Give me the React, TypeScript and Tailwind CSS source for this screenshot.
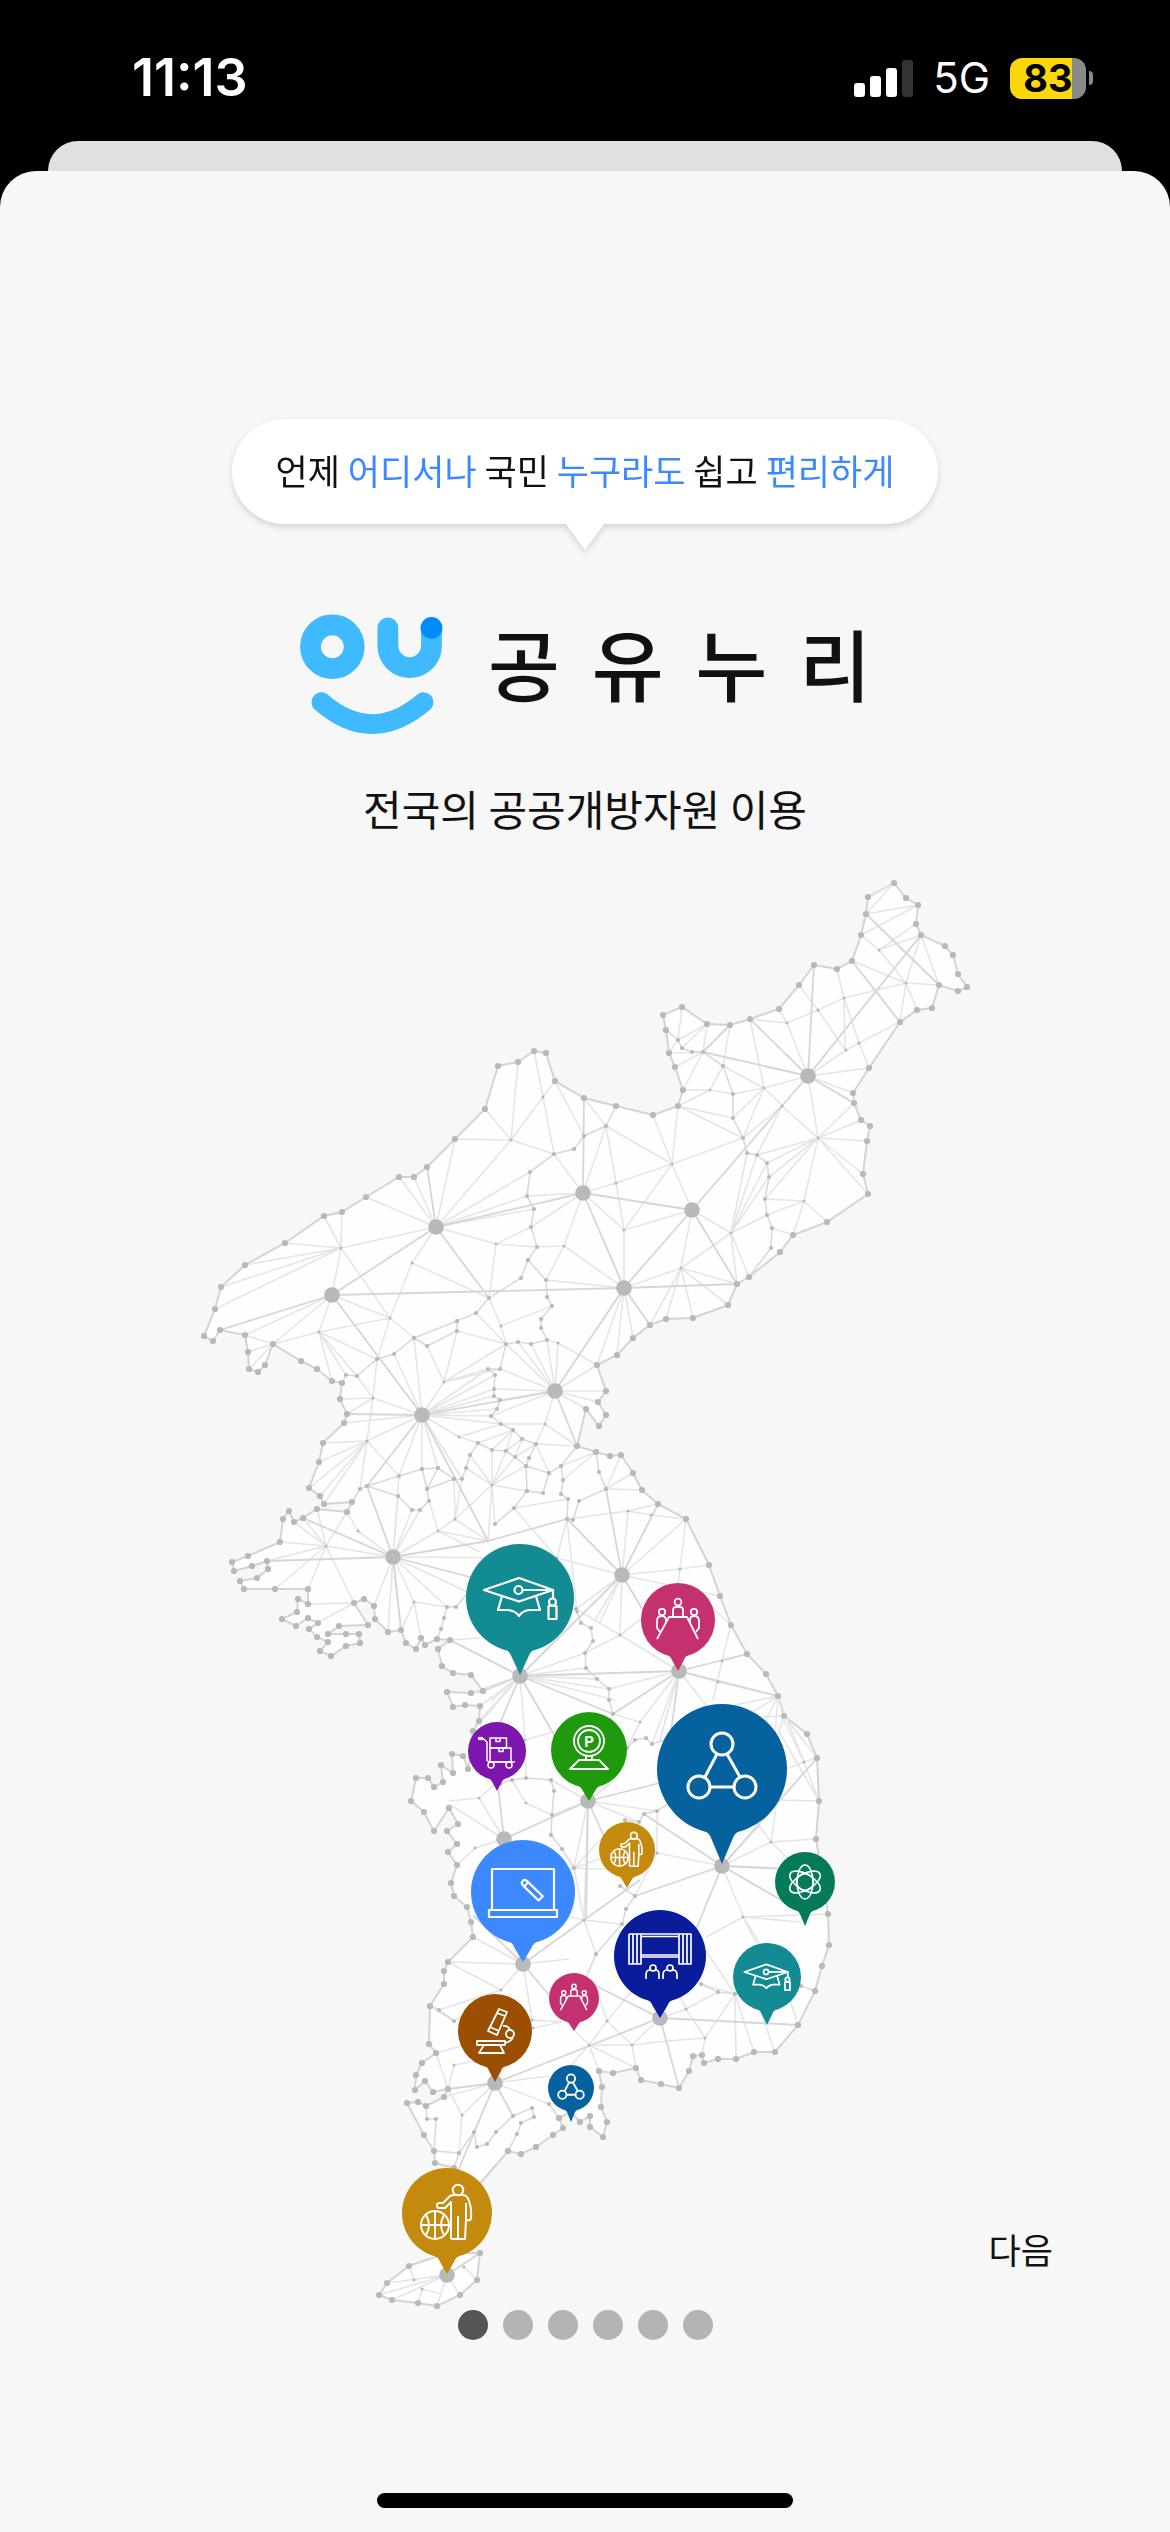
import React from 'react';

// Every list below is flat: x, y, x, y, ... in map units.
const COAST = [
  894, 883, 906, 898, 918, 905, 916, 924, 921, 935, 945, 946, 953, 955, 958, 974, 967, 987, 958, 991, 939, 985, 932, 1008,
  917, 1010, 900, 1022, 869, 1068, 853, 1093, 854, 1103, 861, 1120, 870, 1126, 867, 1141, 863, 1174, 868, 1194, 827, 1222,
  793, 1235, 780, 1252, 749, 1277, 737, 1284, 728, 1305, 693, 1318, 666, 1319, 650, 1325, 633, 1338, 617, 1355, 597, 1365,
  606, 1391, 598, 1402, 606, 1415, 599, 1426, 586, 1409, 577, 1446, 596, 1452, 610, 1456, 621, 1455, 633, 1473, 642, 1490,
  658, 1504, 686, 1519, 709, 1565, 720, 1596, 731, 1625, 747, 1654, 766, 1674, 778, 1696, 784, 1716, 807, 1734, 817, 1758,
  819, 1801, 816, 1839, 828, 1914, 829, 1945, 822, 1966, 815, 1991, 798, 2025, 775, 2052, 754, 2052, 736, 2059, 718, 2059,
  704, 2063, 702, 2055, 693, 2056, 689, 2071, 679, 2088, 661, 2084, 641, 2080, 636, 2068, 613, 2073, 599, 2071, 602, 2087,
  601, 2107, 607, 2122, 603, 2137, 590, 2127, 590, 2116, 580, 2122, 571, 2112, 559, 2118, 563, 2128, 553, 2135, 536, 2147,
  521, 2154, 508, 2151, 470, 2195, 454, 2190, 454, 2168, 435, 2163, 434, 2151, 424, 2135, 407, 2103, 418, 2102, 426, 2106,
  444, 2097, 448, 2089, 433, 2092, 425, 2081, 415, 2090, 416, 2075, 422, 2063, 436, 2053, 429, 2044, 430, 2006, 444, 1984,
  444, 1971, 448, 1962, 473, 1937, 471, 1922, 467, 1907, 454, 1896, 451, 1883, 457, 1865, 448, 1852, 457, 1844, 447, 1831,
  458, 1824, 449, 1808, 434, 1831, 424, 1812, 411, 1801, 416, 1778, 428, 1778, 434, 1787, 443, 1782, 441, 1765, 453, 1773,
  452, 1754, 463, 1756, 468, 1769, 473, 1731, 479, 1721, 480, 1706, 465, 1705, 453, 1707, 447, 1692, 471, 1693, 483, 1691,
  471, 1675, 453, 1673, 442, 1666, 438, 1649, 450, 1640, 437, 1639, 425, 1645, 421, 1638, 416, 1649, 406, 1643, 401, 1630,
  388, 1632, 375, 1619, 374, 1606, 364, 1599, 354, 1603, 368, 1625, 339, 1626, 328, 1634, 346, 1634, 359, 1634, 360, 1643,
  346, 1646, 331, 1656, 320, 1651, 328, 1642, 317, 1637, 309, 1629, 318, 1623, 308, 1618, 296, 1626, 282, 1619, 297, 1612,
  298, 1599, 308, 1604, 308, 1589, 275, 1589, 244, 1589, 240, 1581, 257, 1578, 268, 1569, 267, 1561, 252, 1566, 234, 1571,
  232, 1562, 248, 1556, 280, 1542, 283, 1519, 289, 1511, 294, 1522, 303, 1518, 317, 1509, 347, 1512, 352, 1502, 324, 1504,
  320, 1496, 309, 1488, 319, 1462, 323, 1443, 344, 1423, 347, 1414, 340, 1399, 342, 1383, 332, 1381, 317, 1369, 301, 1361,
  273, 1344, 265, 1365, 258, 1372, 249, 1369, 248, 1352, 245, 1335, 220, 1330, 213, 1341, 204, 1336, 215, 1309, 221, 1287,
  245, 1265, 285, 1243, 324, 1216, 342, 1212, 366, 1197, 399, 1177, 414, 1177, 427, 1167, 455, 1139, 485, 1109, 498, 1066,
  518, 1062, 534, 1051, 546, 1053, 555, 1081, 584, 1098, 616, 1106, 653, 1115, 678, 1106, 683, 1090, 675, 1067, 669, 1053,
  666, 1030, 663, 1015, 682, 1007, 707, 1024, 730, 1025, 750, 1019, 779, 1009, 799, 985, 814, 965, 837, 969, 852, 961,
  861, 935, 866, 914, 868, 897,
];

const ISLAND = [
  480, 2253, 477, 2280, 460, 2295, 437, 2306, 418, 2303, 392, 2300, 379, 2295, 387, 2283, 409, 2266, 447, 2253,
];

const BORDERS = [
  [666, 1030, 678, 1040, 682, 1048, 692, 1052, 703, 1052, 723, 1066, 733, 1094, 733, 1118, 743, 1138, 747, 1153, 757, 1155, 767, 1163, 769, 1177, 765, 1199, 767, 1215, 772, 1228, 771, 1248, 749, 1277],
  [616, 1106, 606, 1126, 584, 1136, 574, 1149, 554, 1154, 530, 1172, 527, 1196, 534, 1209, 531, 1227, 537, 1247, 528, 1260, 521, 1278, 489, 1298, 476, 1313, 457, 1321, 414, 1338, 394, 1354, 377, 1359, 357, 1376, 346, 1375, 342, 1383],
  [457, 1321, 457, 1331, 427, 1346, 414, 1338],
  [528, 1260, 546, 1280, 547, 1297, 552, 1306, 541, 1319, 541, 1328, 547, 1340, 531, 1344, 518, 1342, 506, 1344, 500, 1369, 488, 1369, 495, 1375, 494, 1389, 494, 1396, 500, 1400, 497, 1409, 491, 1416, 501, 1424, 513, 1430, 522, 1439, 536, 1444, 529, 1458, 526, 1466, 527, 1491, 514, 1508, 495, 1524],
  [526, 1466, 515, 1457, 506, 1451, 492, 1450, 478, 1443, 470, 1455, 466, 1468, 462, 1479, 454, 1479, 438, 1468, 422, 1469, 399, 1476, 367, 1486, 360, 1489, 352, 1502],
  [438, 1468, 427, 1489, 454, 1479],
  [422, 1469, 427, 1489, 429, 1501, 420, 1510, 412, 1510, 398, 1496, 367, 1486],
  [577, 1446, 561, 1466, 563, 1480, 561, 1494, 568, 1499, 567, 1519, 573, 1520, 579, 1501, 606, 1489],
  [596, 1452, 599, 1472, 606, 1489],
  [527, 1491, 543, 1493, 549, 1473, 526, 1466],
  [549, 1473, 561, 1466],
  [576, 1609, 581, 1623, 591, 1628, 593, 1641, 585, 1653, 586, 1668, 597, 1679, 609, 1689, 609, 1700, 613, 1714],
  [615, 1755, 627, 1748, 635, 1740, 646, 1738, 652, 1744, 676, 1736],
  [680, 1796, 657, 1811, 644, 1814, 639, 1822, 625, 1820],
  [470, 1590, 456, 1607, 447, 1607, 444, 1618, 441, 1629, 437, 1639],
  [500, 1784, 512, 1780, 526, 1778, 551, 1780, 554, 1791, 552, 1815, 551, 1835, 562, 1849, 574, 1868],
  [620, 1886, 635, 1896, 626, 1909, 622, 1924, 596, 1954, 585, 1980],
  [701, 1984, 718, 1992, 735, 1994],
  [790, 1982, 801, 1986, 815, 1991],
  [430, 2006, 439, 2010, 454, 2021],
  [434, 2151, 459, 2153, 454, 2168],
  [459, 2153, 474, 2132, 477, 2147, 487, 2144, 496, 2132, 513, 2116, 532, 2108, 534, 2117, 521, 2123, 517, 2134, 508, 2151],
  [426, 2106, 427, 2119, 436, 2119, 434, 2151],
  [549, 2104, 559, 2118],
];

// Each fan starts at its centre and lists the points it is joined to.
const FANS = [
  [868, 897, 894, 883], [866, 914, 894, 883, 918, 905], [861, 935, 918, 905],
  [879, 950, 861, 935, 921, 935, 916, 924, 906, 983],
  [906, 983, 852, 961, 900, 1022, 917, 1010, 939, 985, 921, 935, 844, 998],
  [921, 935, 939, 985],
  [844, 998, 837, 969, 845, 1050, 818, 1010],
  [818, 1010, 799, 985, 845, 1050, 787, 1023],
  [846, 1050, 808, 1076, 859, 1043],
  [859, 1043, 900, 1022, 869, 1068, 844, 998],
  [787, 1023, 779, 1009, 750, 1019, 808, 1076],
  [808, 1076, 869, 1068, 853, 1093],
  [764, 1088, 750, 1019, 723, 1066, 733, 1094, 733, 1118, 743, 1138, 808, 1076, 782, 1105],
  [782, 1106, 743, 1138, 757, 1155, 818, 1138],
  [818, 1138, 808, 1076, 854, 1103, 861, 1120, 867, 1141, 863, 1174, 868, 1194, 757, 1155, 767, 1163, 769, 1177, 765, 1199, 804, 1201],
  [804, 1201, 765, 1199, 767, 1215, 827, 1222, 793, 1235],
  [772, 1228, 793, 1235],
  [731, 1233, 747, 1153, 757, 1155, 767, 1163, 769, 1177, 767, 1215, 692, 1210, 681, 1268, 737, 1284, 749, 1277],
  [672, 1164, 653, 1115, 678, 1106, 606, 1126, 743, 1138, 616, 1183, 624, 1230, 692, 1210],
  [710, 1090, 678, 1106, 683, 1090, 723, 1066, 733, 1094],
  [678, 1106, 733, 1118, 743, 1138],
  [703, 1052, 707, 1024, 669, 1053, 675, 1067, 683, 1090],
  [678, 1040, 682, 1007, 707, 1024, 669, 1053],
  [682, 1048, 707, 1024],
  [723, 1066, 730, 1025],
  [616, 1183, 583, 1193, 606, 1126, 624, 1230],
  [624, 1230, 583, 1193, 692, 1210, 624, 1288],
  [681, 1268, 692, 1210, 624, 1288, 737, 1284, 728, 1305, 693, 1318, 666, 1319, 650, 1325],
  [564, 1246, 583, 1193, 537, 1247, 546, 1280, 624, 1288],
  [624, 1288, 546, 1280, 633, 1338, 617, 1355, 597, 1365],
  [511, 1140, 485, 1109, 455, 1139, 518, 1062, 543, 1097, 554, 1154, 436, 1227],
  [543, 1097, 534, 1051, 555, 1081, 554, 1154],
  [584, 1136, 555, 1081, 606, 1126],
  [606, 1126, 584, 1098],
  [583, 1193, 554, 1154, 606, 1126, 531, 1227, 527, 1196],
  [436, 1227, 530, 1172, 527, 1196, 534, 1209, 496, 1244, 412, 1263, 341, 1248, 366, 1197, 399, 1177, 414, 1177, 455, 1139],
  [496, 1244, 537, 1247, 489, 1298, 531, 1227],
  [412, 1263, 489, 1298, 390, 1318],
  [341, 1248, 324, 1216, 342, 1212, 285, 1243, 245, 1265, 221, 1287, 215, 1309, 332, 1295, 390, 1318],
  [390, 1318, 332, 1295, 319, 1332, 414, 1338, 377, 1359],
  [319, 1332, 332, 1295, 273, 1344, 377, 1359, 357, 1376, 346, 1375, 332, 1381],
  [332, 1295, 245, 1335, 273, 1344],
  [273, 1344, 245, 1335, 248, 1352, 249, 1369],
  [501, 1326, 489, 1298, 552, 1306, 506, 1344],
  [506, 1344, 476, 1313, 457, 1331, 444, 1382],
  [444, 1382, 427, 1346, 457, 1331, 488, 1369, 500, 1369, 422, 1415],
  [373, 1398, 377, 1359, 340, 1399, 347, 1414, 357, 1376, 422, 1415, 367, 1441],
  [367, 1441, 422, 1415, 323, 1443, 319, 1462, 309, 1488, 320, 1496, 324, 1504, 360, 1489, 399, 1476],
  [422, 1415, 394, 1354, 414, 1338, 488, 1369, 495, 1375, 494, 1389, 494, 1396, 497, 1409, 491, 1416, 501, 1424, 459, 1437, 344, 1423, 399, 1476, 422, 1469, 438, 1468, 462, 1479],
  [555, 1391, 506, 1344, 518, 1342, 531, 1344, 547, 1340, 558, 1343, 597, 1365, 606, 1391, 598, 1402, 586, 1409, 494, 1389, 500, 1369, 500, 1400, 491, 1416, 545, 1424],
  [558, 1343, 547, 1340, 597, 1365],
  [545, 1424, 501, 1424, 577, 1446, 536, 1444],
  [459, 1437, 501, 1424, 478, 1443],
  [513, 1430, 478, 1443, 492, 1450, 506, 1451],
  [522, 1439, 506, 1451, 515, 1457],
  [536, 1444, 577, 1446, 549, 1473, 515, 1457],
  [492, 1485, 492, 1450, 506, 1451, 470, 1455, 526, 1466, 515, 1457, 527, 1491, 455, 1519, 488, 1541, 466, 1468, 495, 1524],
  [455, 1519, 454, 1479, 462, 1479, 488, 1541, 438, 1531],
  [438, 1531, 429, 1501, 488, 1541, 393, 1557, 480, 1552],
  [514, 1508, 568, 1499, 557, 1558],
  [557, 1558, 622, 1575, 567, 1519, 393, 1557],
  [577, 1612, 567, 1519],
  [596, 1452, 561, 1466, 563, 1480],
  [606, 1489, 621, 1455, 633, 1473, 642, 1490],
  [628, 1511, 658, 1504, 567, 1519, 622, 1575, 651, 1515],
  [651, 1515, 686, 1519],
  [622, 1575, 686, 1519, 680, 1569, 720, 1596, 620, 1635, 595, 1620, 600, 1622, 576, 1609],
  [680, 1569, 686, 1519, 709, 1565, 676, 1600],
  [620, 1635, 576, 1609, 679, 1671, 585, 1653, 665, 1600],
  [731, 1625, 709, 1605, 722, 1661],
  [393, 1557, 358, 1531, 326, 1546, 374, 1606, 388, 1632, 401, 1630, 414, 1602, 398, 1496, 399, 1476, 412, 1510, 420, 1510, 447, 1607, 480, 1598, 438, 1531],
  [358, 1531, 347, 1512],
  [326, 1546, 317, 1509, 347, 1512, 303, 1518, 294, 1522, 280, 1542, 267, 1561, 275, 1589, 308, 1589, 354, 1603],
  [414, 1602, 447, 1607, 401, 1630, 421, 1638],
  [354, 1603, 308, 1604, 317, 1623],
  [450, 1640, 480, 1638, 520, 1676],
  [520, 1676, 471, 1693, 480, 1706, 479, 1721, 473, 1731, 491, 1701, 525, 1740, 585, 1653, 609, 1689, 586, 1668, 597, 1679, 615, 1700],
  [525, 1740, 560, 1730, 526, 1778],
  [679, 1671, 718, 1682, 609, 1689, 640, 1722, 652, 1744, 660, 1740, 710, 1710],
  [722, 1661, 747, 1654, 713, 1700],
  [718, 1682, 778, 1696],
  [640, 1722, 613, 1714, 627, 1748],
  [784, 1716, 760, 1717, 778, 1735, 817, 1758],
  [778, 1696, 735, 1705, 740, 1720, 766, 1720, 775, 1735, 804, 1762],
  [804, 1762, 817, 1758, 784, 1770, 819, 1801, 784, 1720],
  [819, 1801, 780, 1800, 778, 1730],
  [771, 1842, 722, 1866, 816, 1839, 755, 1820, 780, 1780, 800, 1870],
  [722, 1866, 743, 1916, 657, 1853, 760, 1825, 790, 1868],
  [657, 1853, 657, 1811, 625, 1820, 635, 1896],
  [743, 1917, 828, 1914, 801, 1922, 706, 1937, 760, 1950, 770, 1960],
  [686, 2009, 718, 1992, 672, 1980, 705, 2038, 660, 2018],
  [705, 2038, 735, 1994, 667, 2041, 702, 2055],
  [632, 2045, 636, 2068, 589, 2045, 667, 2041, 660, 2018, 607, 2021],
  [735, 1994, 736, 2059, 754, 2052, 702, 1945, 701, 1984],
  [798, 2025, 785, 1985], [775, 2052, 760, 2010],
  [589, 2045, 567, 2070, 599, 2071, 574, 2030, 607, 2021, 636, 2068],
  [607, 2021, 597, 1990, 660, 1956],
  [523, 1964, 448, 1962, 569, 1959, 532, 2020, 501, 1990, 473, 1937],
  [501, 1990, 448, 1962, 439, 2010],
  [532, 2020, 495, 2083, 562, 2022], [533, 2028, 562, 2022],
  [454, 2021, 430, 2006, 475, 2010],
  [436, 2053, 465, 2045, 448, 2089],
  [454, 2065, 448, 2089, 480, 2060],
  [462, 2115, 448, 2089, 495, 2083, 459, 2153],
  [495, 2083, 549, 2104, 444, 2097, 549, 2076],
  [588, 1801, 551, 1780, 552, 1815, 639, 1822, 574, 1868, 615, 1780, 657, 1811],
  [584, 1920, 588, 1801, 596, 1954, 526, 1905, 620, 1924, 574, 1868],
  [574, 1868, 625, 1850, 620, 1870, 600, 1840, 550, 1880],
  [479, 1798, 500, 1780, 449, 1801, 504, 1839], [526, 1803, 512, 1780, 552, 1815],
  [504, 1839, 449, 1804, 479, 1798, 475, 1848],
  [475, 1848, 457, 1865],
  [447, 2275, 387, 2283, 379, 2295, 392, 2300, 437, 2306, 460, 2295, 480, 2253],
  [414, 2280, 409, 2266], [422, 2289, 418, 2303, 442, 2294], [464, 2267, 477, 2280],
];

const TRUNKS = [
  [808, 1076, 703, 1052, 750, 1019, 814, 965, 921, 935, 854, 1103, 692, 1210],
  [866, 914, 939, 985], [852, 961, 900, 1022], [703, 1052, 730, 1025],
  [692, 1210, 624, 1288, 583, 1193, 737, 1284],
  [583, 1193, 624, 1288, 584, 1098, 436, 1227],
  [436, 1227, 427, 1167, 332, 1295, 489, 1298],
  [624, 1288, 332, 1295, 737, 1284, 555, 1391, 650, 1325],
  [332, 1295, 220, 1330, 422, 1415],
  [422, 1415, 555, 1391, 347, 1414, 367, 1486, 488, 1541],
  [393, 1557, 367, 1486, 303, 1518, 267, 1561, 488, 1541, 401, 1630, 520, 1590],
  [555, 1391, 577, 1446], [567, 1519, 488, 1541],
  [622, 1575, 567, 1519, 606, 1489, 658, 1504, 520, 1676, 679, 1671],
  [520, 1676, 450, 1640, 483, 1691, 679, 1671, 613, 1714, 497, 1730, 560, 1745],
  [679, 1671, 747, 1654, 778, 1696, 613, 1714, 670, 1740],
  [588, 1801, 680, 1778, 504, 1839, 586, 1920, 610, 1850],
  [722, 1866, 644, 1814, 817, 1758, 805, 1870, 790, 1905, 635, 1896, 660, 2018],
  [504, 1839, 498, 1785],
  [523, 1964, 473, 1915, 584, 1920, 570, 2020],
  [584, 1920, 640, 1880],
  [660, 2018, 798, 2025, 679, 2088, 580, 1978, 495, 2083],
  [495, 2083, 448, 2089, 474, 2132, 513, 2116, 450, 2190],
  [447, 2275, 480, 2253],
];

const HUBS = [
  808, 1076, 692, 1210, 583, 1193, 436, 1227, 332, 1295, 624, 1288, 555, 1391, 422, 1415, 393, 1557, 622, 1575,
  520, 1676, 679, 1671, 588, 1801, 504, 1839, 722, 1866, 523, 1964, 660, 2018, 495, 2083, 447, 2275,
];

const toPairs = (list: number[]) => {
  const out: [number, number][] = [];
  for (let i = 0; i < list.length; i += 2) out.push([list[i], list[i + 1]]);
  return out;
};

const linePath = (list: number[]) => 'M' + toPairs(list).map((p) => p.join(' ')).join('L');

const fanPath = (list: number[]) => {
  const [center, ...ends] = toPairs(list);
  return ends.map((e) => `M${center.join(' ')}L${e.join(' ')}`).join('');
};

const Dots = ({ list, r }: { list: number[]; r: number }) => (
  <>
    {toPairs(list).map(([x, y], i) => (
      <circle key={i} cx={x} cy={y} r={r} />
    ))}
  </>
);

interface IconProps {
  weight: number;
}

const CapIcon = ({ weight }: IconProps) => (
  <g strokeWidth={2.2 * weight}>
    <path d="M-36 -8L-1 -20L33 -8L-1 3.500Z" />
    <circle cx="-1.500" cy="-8" r="4" />
    <path d="M2 -8H33V1M-18 -2L-22 12H-12Q-4 13 -1 18Q2 13 9 12H20L16 -2" />
    <circle cx="32.500" cy="4" r="3.500" />
    <rect x="28.500" y="8" width="8" height="13" />
  </g>
);

const MeetingIcon = ({ weight }: IconProps) => (
  <g strokeWidth={1.8 * weight}>
    <circle cx="0" cy="-18" r="3.400" />
    <path d="M-5 -3V-10Q-5 -13 -2 -13H2Q5 -13 5 -10V-3" />
    <path d="M-21 19L-9 -3H9L20 19" />
    <circle cx="-16" cy="-8" r="3.200" />
    <circle cx="16" cy="-8" r="3.200" />
    <path d="M-12 2V-1Q-13 -4 -16 -4Q-21 -4 -21 1V8L-18 12" />
    <path d="M12 2V-1Q13 -4 16 -4Q21 -4 21 1V8L18 12" />
  </g>
);

const TrolleyIcon = ({ weight }: IconProps) => (
  <g strokeWidth={1.5 * weight}>
    <path d="M-19 -12.500H-14" strokeWidth="3.2" />
    <path d="M-14 -12.500L-10 -9V9.500L-8 11H18" />
    <rect x="-7" y="-13" width="16.500" height="10" />
    <rect x="-7" y="-3" width="21" height="14" />
    <path d="M-1 -13V-9.500H3V-13M2 -3V.5H6V-3" />
    <circle cx="-6" cy="14" r="3" />
    <circle cx="12" cy="14" r="3" />
  </g>
);

const ParkingIcon = ({ weight }: IconProps) => (
  <g strokeWidth={1.8 * weight}>
    <circle cx="0" cy="-9" r="15" />
    <circle cx="0" cy="-9" r="11" />
    <text x="0" y="-3.500" textAnchor="middle" fontSize="15" fontWeight="700" fill="white" stroke="none" fontFamily="Inter, sans-serif">
      P
    </text>
    <path d="M-3 6V10M3 6V10M-10 10H10L19 19H-19Z" />
  </g>
);

const ShareIcon = ({ weight }: IconProps) => (
  <g strokeWidth={3 * weight}>
    <circle cx="0" cy="-25" r="11" />
    <circle cx="-23" cy="18" r="11" />
    <circle cx="23" cy="18" r="11" />
    <path d="M-5 -15L-17 8M5 -15L18 8M-12 18H12" />
  </g>
);

const SportIcon = ({ weight }: IconProps) => (
  <g strokeWidth={2 * weight}>
    <circle cx="-12" cy="12" r="14" />
    <path d="M-26 12H2M-12 -2V26M-21 2Q-15 12 -21 22M-3 2Q-9 12 -3 22" />
    <circle cx="11" cy="-23" r="5.300" />
    <path d="M4 26V-11L-2 -5H-8Q-10 -5 -10 -7.500T-8 -10H-4L1 -15Q3 -18 7 -18H16Q20 -18 22 -12Q25 -4 24 6Q23 8 19 7V-10" />
    <path d="M19 7L18 26H4M11 3V26" />
  </g>
);

const AtomIcon = ({ weight }: IconProps) => (
  <g strokeWidth={1.6 * weight}>
    <ellipse rx="8" ry="17" />
    <ellipse rx="8" ry="17" transform="rotate(60)" />
    <ellipse rx="8" ry="17" transform="rotate(120)" />
    <circle r="8.500" />
  </g>
);

const LaptopIcon = ({ weight }: IconProps) => (
  <g strokeWidth={2.2 * weight}>
    <rect x="-31" y="-23" width="62" height="41" />
    <rect x="-34" y="18" width="68" height="7" />
    <g transform="translate(9 -2) rotate(44)">
      <path d="M-9 -3H12V3H-9Q-13 3 -13 0T-9 -3ZM-8 -3V3" />
    </g>
  </g>
);

const TheaterIcon = ({ weight }: IconProps) => (
  <g strokeWidth={1.7 * weight}>
    <path d="M-31 -22H31V8H19V-22M-31 -22V8H-19V-22M-27 -22V8M-23 -22V8M23 -22V8M27 -22V8M-19 -19.500H19M-19 -1H19M-19 1H19" />
    <circle cx="-7" cy="12" r="3" />
    <circle cx="10" cy="12" r="3" />
    <path d="M-14 23V19Q-14 14 -10 14M-4 14Q-1 14 -1 19V23M3 23V19Q3 14 7 14M13 14Q17 14 17 19V23" />
  </g>
);

const MicroscopeIcon = ({ weight }: IconProps) => (
  <g strokeWidth={1.8 * weight}>
    <path d="M4 -22L12 -19L2 4L-7 0ZM2 -18L10 -15M-5 -4L4 0" />
    <path d="M8 -5Q13 -6 15 -1M18 6Q16 11 10 12" />
    <circle cx="15" cy="3" r="4" />
    <rect x="-18" y="10" width="28" height="4" />
    <path d="M-11 14L-16 22H9L5 14" />
  </g>
);

interface PinData {
  x: number;
  y: number;
  r: number;
  tip: number;
  color: string;
  base: number;
  Icon: React.FC<IconProps>;
}

// base is the radius at which the icon was drawn
const PINS: PinData[] = [
  { x: 520, y: 1598, r: 54, tip: 77, color: '#138b92', base: 54, Icon: CapIcon },
  { x: 678, y: 1620, r: 37, tip: 51, color: '#c5306e', base: 37, Icon: MeetingIcon },
  { x: 497, y: 1751, r: 29, tip: 40, color: '#7c16ae', base: 29, Icon: TrolleyIcon },
  { x: 589, y: 1750, r: 38, tip: 51, color: '#1f9a0e', base: 38, Icon: ParkingIcon },
  { x: 722, y: 1769, r: 65, tip: 95, color: '#06629e', base: 65, Icon: ShareIcon },
  { x: 627, y: 1850, r: 28, tip: 38, color: '#c38a0e', base: 45, Icon: SportIcon },
  { x: 805, y: 1882, r: 30, tip: 44, color: '#037a5a', base: 30, Icon: AtomIcon },
  { x: 523, y: 1892, r: 52, tip: 70, color: '#3b88ff', base: 52, Icon: LaptopIcon },
  { x: 660, y: 1956, r: 46, tip: 62, color: '#0b1c9a', base: 46, Icon: TheaterIcon },
  { x: 767, y: 1977, r: 34, tip: 48, color: '#138b92', base: 54, Icon: CapIcon },
  { x: 574, y: 1998, r: 25, tip: 33, color: '#c5306e', base: 39, Icon: MeetingIcon },
  { x: 495, y: 2031, r: 37, tip: 51, color: '#9a4f02', base: 37, Icon: MicroscopeIcon },
  { x: 571, y: 2088, r: 23, tip: 34, color: '#06629e', base: 61, Icon: ShareIcon },
  { x: 447, y: 2213, r: 45, tip: 61, color: '#c38a0e', base: 45, Icon: SportIcon },
];

const Pin = ({ x, y, r, tip, color, base, Icon }: PinData) => (
  <g transform={`translate(${x} ${y})`}>
    <circle r={r} fill={color} />
    <path
      fill={color}
      d={`M${-r * 0.3} ${r * 0.94}Q${-r * 0.2} ${r * 0.97} ${-r * 0.16} ${r * 1.08}L0 ${tip}L${r * 0.16} ${r * 1.08}Q${r * 0.2} ${r * 0.97} ${r * 0.3} ${r * 0.94}Z`}
    />
    <g transform={`scale(${r / base})`} fill="none" stroke="white" strokeLinejoin="round">
      <Icon weight={Math.sqrt(base / r)} />
    </g>
  </g>
);

const KoreaMap = () => (
  <svg viewBox="185 870 800 1440" className="col-start-1 row-start-1 w-[800px] max-w-full justify-self-center" role="img" aria-label="전국 공공개방자원 지도">
    <path d={linePath(COAST) + 'Z'} fill="#fefefe" stroke="#d4d4d4" strokeWidth="2" />
    <path d={linePath(ISLAND) + 'Z'} fill="#fefefe" stroke="#d4d4d4" strokeWidth="2" />
    <path d={FANS.map(fanPath).join('')} fill="none" stroke="#e5e5e5" strokeWidth="1.6" />
    <path d={BORDERS.map(linePath).join('')} fill="none" stroke="#dadada" strokeWidth="1.6" />
    <path d={TRUNKS.map(fanPath).join('')} fill="none" stroke="#d6d6d6" strokeWidth="1.8" />
    <g fill="#b9b9b9">
      <Dots list={FANS.flatMap((f) => f.slice(0, 2))} r={1.5} />
      <Dots list={BORDERS.flat()} r={2.1} />
      <Dots list={COAST} r={3.1} />
      <Dots list={ISLAND} r={3.1} />
      <Dots list={HUBS} r={7.8} />
    </g>
    {PINS.map((pin, i) => (
      <Pin key={i} {...pin} />
    ))}
  </svg>
);

const StatusBar = () => (
  <header className="flex h-[141px] items-start justify-between pt-[48px] pr-[77px] pl-[132px] font-[Inter,sans-serif] text-white">
    <span className="text-[52px] leading-[60px] font-semibold">11:13</span>
    <div className="flex h-[60px] items-center gap-5">
      <div className="flex h-[37px] items-end gap-[5px]">
        <span className="h-[14px] w-[11px] rounded-[3px] bg-white" />
        <span className="h-[21px] w-[11px] rounded-[3px] bg-white" />
        <span className="h-[29px] w-[11px] rounded-[3px] bg-white" />
        <span className="h-[37px] w-[11px] rounded-[3px] bg-[#333]" />
      </div>
      <span className="text-[42px] leading-[60px]">5G</span>
      <div className="flex items-center gap-[3px]">
        <div className="flex h-[41px] w-[76px] items-center justify-center rounded-xl bg-linear-to-r from-[#ffd60a] from-82% to-[#8a8a8a] to-82% text-[38px] leading-none font-bold text-black">
          83
        </div>
        <span className="h-[14px] w-[4px] rounded-r-full bg-[#8a8a8a]" />
      </div>
    </div>
  </header>
);

const Bubble = () => (
  <div className="mt-[248px] flex flex-col items-center drop-shadow-[0_3px_3px_rgba(0,0,0,0.14)]">
    <p className="rounded-full bg-white px-11 pb-1 text-[35px] leading-[101px] whitespace-nowrap">
      언제 <span className="text-[#3b88ff]">어디서나</span> 국민 <span className="text-[#3b88ff]">누구라도</span> 쉽고{' '}
      <span className="text-[#3b88ff]">편리하게</span>
    </p>
    <svg viewBox="0 0 38 26" className="h-[26px] w-[38px]" aria-hidden="true">
      <path d="M0 0H38L19 26Z" fill="white" />
    </svg>
  </div>
);

const Logo = () => (
  <div className="mt-16 flex items-start gap-11">
    <svg viewBox="301 613 145 121" className="h-[120px] w-[145px]" aria-hidden="true">
      <g fill="none" stroke="#3fb9ff" strokeLinecap="round">
        <circle cx="334" cy="646" r="22" strokeWidth="21" />
        <path d="M390 627V645A22 22 0 0 0 434 645V627" strokeWidth="21" />
        <path d="M323 702Q374 746 426 702" strokeWidth="20" />
      </g>
      <circle cx="434" cy="627" r="11" fill="#008bff" />
    </svg>
    <h1 className="flex gap-8 text-[78px] leading-[96px] font-medium">
      <span>공</span>
      <span>유</span>
      <span>누</span>
      <span>리</span>
    </h1>
  </div>
);

export default function App() {
  const pages = [1, 2, 3, 4, 5, 6];

  return (
    <div className="flex min-h-screen flex-col bg-black">
      <StatusBar />
      <div className="mx-12 h-[30px] rounded-t-[30px] bg-[#e0e0e0]" />
      <main className="flex flex-1 flex-col items-center rounded-t-[36px] bg-[#f7f7f7] font-['Noto_Sans_CJK_KR',sans-serif] text-[#111]">
        <Bubble />
        <Logo />
        <p className="mt-11 text-[42px] leading-[60px]">전국의 공공개방자원 이용</p>
        <div className="mt-8 grid w-full">
          <KoreaMap />
          <button type="button" className="col-start-1 row-start-1 mr-[117px] mb-9 self-end justify-self-end text-[35px] leading-[50px]">
            다음
          </button>
        </div>
        <nav className="flex gap-[15px]">
          {pages.map((page) => (
            <button
              key={page}
              type="button"
              aria-label={`${page}`}
              className={`size-[30px] rounded-full ${page === 1 ? 'bg-[#555]' : 'bg-[#b4b4b4]'}`}
            />
          ))}
        </nav>
        <div className="mt-auto mb-6 h-[15px] w-[416px] rounded-full bg-black" />
      </main>
    </div>
  );
}
